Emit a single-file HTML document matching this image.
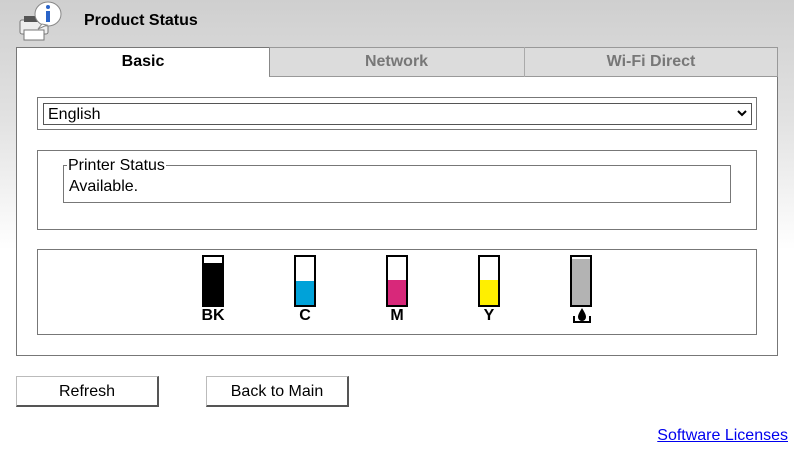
<!DOCTYPE html><html><head><style>
body{margin:0;width:794px;height:462px;overflow:hidden;font-family:"Liberation Sans",sans-serif;background:linear-gradient(#cfcfcf 0px,#e2e2e2 120px,#fff 250px,#fff);position:relative}
.a{position:absolute;box-sizing:border-box}
.tank{position:absolute;top:255px;width:22px;height:52px;border:2px solid #000;box-sizing:border-box;background:#fff}
.tank div{position:absolute;left:0;right:0;bottom:0}
.lbl{position:absolute;top:307px;width:40px;text-align:center;font-weight:bold;font-size:16px}
.btn{position:absolute;top:376px;width:143px;height:31px;background:#fff;border:1px solid #bbb;border-right:2px solid #555;border-bottom:2px solid #555;box-sizing:border-box;font-size:16px;text-align:center;line-height:29px}
</style></head><body>
<svg class="a" style="left:16px;top:0" width="48" height="42" viewBox="0 0 48 42">
<rect x="4" y="20" width="28" height="14" rx="2" fill="#eee" stroke="#777"/>
<rect x="8" y="16" width="20" height="6" fill="#555"/>
<rect x="8" y="30" width="20" height="10" fill="#fff" stroke="#777"/>
<ellipse cx="32" cy="14" rx="13" ry="12" fill="#fff" stroke="#888"/>
<path d="M26 24 L22 29 L31 25Z" fill="#fff" stroke="#888"/>
<rect x="30" y="11" width="4" height="11" fill="#2a64c8"/><circle cx="32" cy="7" r="2" fill="#2a64c8"/>
</svg>
<div class="a" style="left:84px;top:12px;font-size:16px;font-weight:bold">Product Status</div>
<div class="a" style="left:16px;top:47px;width:762px;height:309px;border:1px solid #777;background:#fff"></div>
<div class="a" style="left:269px;top:47px;width:509px;height:30px;background:#dcdcdc;border:1px solid #999;border-left:1px solid #888"></div>
<div class="a" style="left:524px;top:47px;width:1px;height:30px;background:#aaa"></div>
<div class="a" style="left:17px;top:53px;width:252px;text-align:center;font-weight:bold;font-size:16px">Basic</div>
<div class="a" style="left:269px;top:53px;width:255px;text-align:center;font-weight:bold;font-size:16px;color:#777">Network</div>
<div class="a" style="left:524px;top:53px;width:254px;text-align:center;font-weight:bold;font-size:16px;color:#777">Wi-Fi Direct</div>
<div class="a" style="left:37px;top:97px;width:720px;height:33px;border:1px solid #777"></div>
<div class="a" style="left:43px;top:103px;width:709px;height:22px;border:1px solid #555;font-size:16px;padding-left:4px;line-height:21px">English</div>
<svg class="a" style="left:736px;top:108px" width="12" height="10"><path d="M2 3 L6 7 L10 3" stroke="#000" stroke-width="2" fill="none"/></svg>
<div class="a" style="left:37px;top:150px;width:720px;height:80px;border:1px solid #777"></div>
<div class="a" style="left:63px;top:165px;width:668px;height:38px;border:1px solid #777"></div>
<div class="a" style="left:67px;top:157px;background:#fff;padding:0 1px;font-size:16px">Printer Status</div>
<div class="a" style="left:69px;top:178px;font-size:16px">Available.</div>
<div class="a" style="left:37px;top:249px;width:720px;height:86px;border:1px solid #777"></div>
<div class="tank" style="left:202px"><div style="top:6px;background:#000"></div></div>
<div class="tank" style="left:294px"><div style="top:24px;background:#00a2d9"></div></div>
<div class="tank" style="left:386px"><div style="top:23px;background:#d8287a"></div></div>
<div class="tank" style="left:478px"><div style="top:23px;background:#ffef00"></div></div>
<div class="tank" style="left:570px"><div style="top:2px;background:#b3b3b3"></div></div>
<div class="lbl" style="left:193px">BK</div><div class="lbl" style="left:285px">C</div><div class="lbl" style="left:377px">M</div><div class="lbl" style="left:469px">Y</div>
<svg class="a" style="left:571px;top:307px" width="22" height="17"><path d="M11 1 C8 6 7 8 7 10 A4 4 0 0 0 15 10 C15 8 14 6 11 1Z" fill="#000"/><path d="M3 9 V15 H19 V9" stroke="#000" stroke-width="2" fill="none"/></svg>
<div class="btn" style="left:16px">Refresh</div>
<div class="btn" style="left:206px">Back to Main</div>
<div class="a" style="right:6px;top:427px;font-size:16px;color:#00e;text-decoration:underline">Software Licenses</div>
</body></html>
